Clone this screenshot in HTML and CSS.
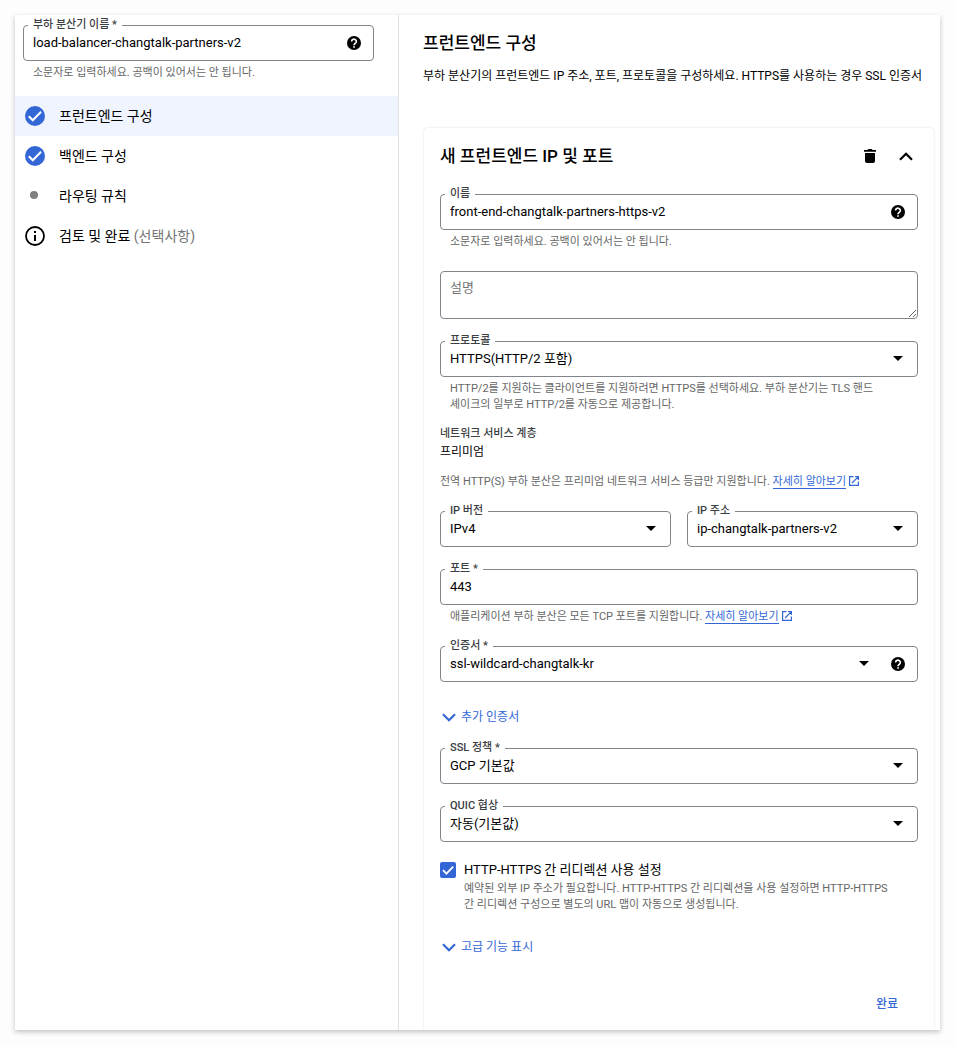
FILE: index.html
```html
<!DOCTYPE html>
<html lang="ko">

<head>
  <meta charset="UTF-8" />
  <meta name="viewport" content="width=device-width, initial-scale=1.0" />
  <title>부하 분산기</title>
  <link rel="stylesheet" href="styles.css">
</head>

<body>
  <!-- Shared icons -->
  <svg class="sprite" aria-hidden="true">
    <symbol id="icon-help" viewBox="0 0 14 14">
      <circle cx="7" cy="7" r="7" />
      <path d="M4.600 5.400a2.400 2.200 0 1 1 3.900 1.700C7.600 7.800 7 8.100 7 9.200" fill="none" stroke="#fff" stroke-width="1.600" />
      <path d="M6.200 10.200h1.700v1.600H6.200z" fill="#fff" />
    </symbol>
    <symbol id="icon-done" viewBox="0 0 20 20">
      <circle cx="10" cy="10" r="10" />
      <path d="M3.800 10.300l4 4 8.300-8.500" fill="none" stroke="#fff" stroke-width="2" />
    </symbol>
    <symbol id="icon-arrow" viewBox="0 0 10 5">
      <path d="M0 0h10L5 5z" />
    </symbol>
    <symbol id="icon-chevron" viewBox="0 0 14 9">
      <path d="M1 1.200l6 6 6-6" fill="none" stroke="currentColor" stroke-width="2.200" />
    </symbol>
    <symbol id="icon-external" viewBox="0 0 10 10">
      <path d="M4.500 .6H.6v8.800h8.800V5.500M6 .6h3.400V4M9.200 .8L3 7" fill="none" stroke="currentColor" stroke-width="1.200" />
    </symbol>
  </svg>

  <div class="window">
    <aside class="sidebar">
      <div class="sidebar-field">
        <div class="field-box">
          <label for="lbName">부하 분산기 이름 *</label>
          <input type="text" id="lbName" value="load-balancer-changtalk-partners-v2" />
          <button type="button" class="help" aria-label="도움말"><svg><use href="#icon-help" /></svg></button>
        </div>
        <p class="hint">소문자로 입력하세요. 공백이 있어서는 안 됩니다.</p>
      </div>

      <nav class="steps">
        <a href="#frontend" class="step active"><svg class="step-icon done"><use href="#icon-done" /></svg>프런트엔드 구성</a>
        <a href="#backend" class="step"><svg class="step-icon done"><use href="#icon-done" /></svg>백엔드 구성</a>
        <a href="#routing" class="step"><svg class="step-icon" viewBox="0 0 20 20"><circle cx="9" cy="9" r="4" fill="#808080" /></svg>라우팅 규칙</a>
        <a href="#review" class="step">
          <svg class="step-icon" viewBox="0 0 20 20">
            <circle cx="10" cy="10" r="9" fill="none" stroke="#000" stroke-width="1.800" />
            <path d="M9 5h2v2H9zM9 9h2v6H9z" />
          </svg>
          <span>검토 및 완료 <span class="optional">(선택사항)</span></span>
        </a>
      </nav>
    </aside>

    <main class="content" id="frontend">
      <h1>프런트엔드 구성</h1>
      <p class="intro">부하 분산기의 프런트엔드 IP 주소, 포트, 프로토콜을 구성하세요. HTTPS를 사용하는 경우 SSL 인증서</p>

      <form class="card">
        <div class="card-header">
          <h2>새 프런트엔드 IP 및 포트</h2>
          <button type="button" class="icon-button" aria-label="삭제">
            <svg width="12" height="14" viewBox="0 0 12 14"><path d="M0 1h3.500l.7-1h3.600l.7 1H12v1.800H0zM1 4h10v8a2 2 0 0 1-2 2H3a2 2 0 0 1-2-2z" /></svg>
          </button>
          <button type="button" class="icon-button" aria-label="접기">
            <svg class="chevron up"><use href="#icon-chevron" /></svg>
          </button>
        </div>

        <div class="field">
          <div class="field-box">
            <label for="feName">이름</label>
            <input type="text" id="feName" value="front-end-changtalk-partners-https-v2" />
            <button type="button" class="help" aria-label="도움말"><svg><use href="#icon-help" /></svg></button>
          </div>
          <p class="hint">소문자로 입력하세요. 공백이 있어서는 안 됩니다.</p>
        </div>

        <div class="field">
          <textarea id="description" placeholder="설명" aria-label="설명"></textarea>
        </div>

        <div class="field protocol">
          <div class="field-box">
            <label for="protocol">프로토콜</label>
            <select id="protocol"><option>HTTPS(HTTP/2 포함)</option></select>
            <svg class="arrow"><use href="#icon-arrow" /></svg>
          </div>
          <p class="hint">HTTP/2를 지원하는 클라이언트를 지원하려면 HTTPS를 선택하세요. 부하 분산기는 TLS 핸드<br />셰이크의 일부로 HTTP/2를 자동으로 제공합니다.</p>
        </div>

        <div class="tier">
          <h3>네트워크 서비스 계층</h3>
          <p class="tier-value">프리미엄</p>
          <p class="note">전역 HTTP(S) 부하 분산은 프리미엄 네트워크 서비스 등급만 지원합니다. <a href="#tiers" class="link">자세히 알아보기</a><svg class="external"><use href="#icon-external" /></svg></p>
        </div>

        <div class="row">
          <div class="field">
            <div class="field-box">
              <label for="ipVersion">IP 버전</label>
              <select id="ipVersion"><option>IPv4</option></select>
              <svg class="arrow"><use href="#icon-arrow" /></svg>
            </div>
          </div>
          <div class="field">
            <div class="field-box">
              <label for="ipAddress">IP 주소</label>
              <select id="ipAddress"><option>ip-changtalk-partners-v2</option></select>
              <svg class="arrow"><use href="#icon-arrow" /></svg>
            </div>
          </div>
        </div>

        <div class="field">
          <div class="field-box">
            <label for="port">포트 *</label>
            <input type="text" id="port" value="443" />
          </div>
          <p class="hint">애플리케이션 부하 분산은 모든 TCP 포트를 지원합니다. <a href="#ports" class="link">자세히 알아보기</a><svg class="external"><use href="#icon-external" /></svg></p>
        </div>

        <div class="field">
          <div class="field-box">
            <label for="certificate">인증서 *</label>
            <select id="certificate"><option>ssl-wildcard-changtalk-kr</option></select>
            <svg class="arrow beside-help"><use href="#icon-arrow" /></svg>
            <button type="button" class="help" aria-label="도움말"><svg><use href="#icon-help" /></svg></button>
          </div>
        </div>

        <button type="button" class="expander"><svg class="chevron"><use href="#icon-chevron" /></svg>추가 인증서</button>

        <div class="field">
          <div class="field-box">
            <label for="sslPolicy">SSL 정책 *</label>
            <select id="sslPolicy"><option>GCP 기본값</option></select>
            <svg class="arrow"><use href="#icon-arrow" /></svg>
          </div>
        </div>

        <div class="field quic">
          <div class="field-box">
            <label for="quic">QUIC 협상</label>
            <select id="quic"><option>자동(기본값)</option></select>
            <svg class="arrow"><use href="#icon-arrow" /></svg>
          </div>
        </div>

        <div class="check">
          <span class="check-box">
            <input type="checkbox" id="redirect" checked />
            <svg viewBox="0 0 16 16"><path d="M3 8.200l3.400 3.400L13.200 4.600" fill="none" stroke="#fff" stroke-width="1.800" /></svg>
          </span>
          <div>
            <label for="redirect">HTTP-HTTPS 간 리디렉션 사용 설정</label>
            <p class="note">예약된 외부 IP 주소가 필요합니다. HTTP-HTTPS 간 리디렉션을 사용 설정하면 HTTP-HTTPS<br />간 리디렉션 구성으로 별도의 URL 맵이 자동으로 생성됩니다.</p>
          </div>
        </div>

        <button type="button" class="expander"><svg class="chevron"><use href="#icon-chevron" /></svg>고급 기능 표시</button>

        <div class="actions">
          <button type="button" class="done-button">완료</button>
        </div>
      </form>
    </main>
  </div>
</body>

</html>
```

FILE: styles.css
```css
* {
  box-sizing: border-box;
}

body {
  margin: 0;
  padding: 15px;
  background-color: #fdfdfd;
  color: #000;
  font-family: Roboto, "Noto Sans CJK KR", sans-serif;
  font-size: 13px;
  line-height: 16px;
}

h1,
h2,
h3,
p {
  margin: 0;
}

button,
input,
select,
textarea {
  font: inherit;
  color: inherit;
}

button {
  border: 0;
  padding: 0;
  background: none;
  cursor: pointer;
}

svg {
  display: block;
  flex: none;
}

.sprite {
  display: none;
}

.window {
  display: flex;
  overflow: hidden;
  background-color: #fff;
  box-shadow: 0 2px 5px rgba(0, 0, 0, 0.24);
}

/* Left column */
.sidebar {
  flex: 0 0 384px;
  padding-top: 10px;
  border-right: 1px solid #e0e0e0;
}

.sidebar-field {
  margin: 0 24px 16px 8px;
}

.step {
  display: flex;
  align-items: center;
  gap: 14px;
  height: 40px;
  padding: 0 10px;
  color: #000;
  font-size: 14px;
  text-decoration: none;
}

.step.active {
  background-color: #f0f4ff;
}

.step-icon {
  width: 20px;
  height: 20px;
}

.step-icon.done {
  fill: #3367d6;
}

.optional {
  color: #757575;
}

/* Right column */
.content {
  flex: 1;
  min-width: 0;
  padding: 16px 6px 0 24px;
}

h1,
h2 {
  font-size: 17px;
  font-weight: 500;
  line-height: 24px;
}

.intro {
  margin: 13px -6px 44px 0;
  font-size: 12px;
}

.card {
  margin-left: 1px;
  padding: 16px 16px 8px;
  border-radius: 4px 4px 0 0;
  box-shadow: 0 0 2px rgba(0, 0, 0, 0.16);
}

.card-header {
  display: flex;
  align-items: center;
  margin-bottom: 26px;
}

.card-header h2 {
  flex: 1;
}

.icon-button {
  display: flex;
  align-items: center;
  justify-content: center;
  width: 24px;
  height: 24px;
  margin-left: 12px;
}

.chevron {
  width: 14px;
  height: 9px;
}

.chevron.up {
  transform: rotate(180deg);
}

/* Outlined fields */
.field {
  margin-bottom: 22px;
}

.field-box {
  position: relative;
}

.field-box label {
  position: absolute;
  top: -7px;
  left: 5px;
  padding: 0 5px;
  background-color: #fff;
  color: #3c4043;
  font-size: 11px;
  font-weight: 500;
  line-height: 14px;
}

.field-box input,
.field-box select,
textarea {
  display: block;
  width: 100%;
  height: 36px;
  margin: 0;
  padding: 0 9px 2px;
  border: 1px solid #80868b;
  border-radius: 4px;
  background-color: #fff;
  appearance: none;
}

.field-box select {
  padding-bottom: 0;
}

textarea {
  height: 48px;
  padding: 8px 9px;
  resize: vertical;
}

textarea::placeholder {
  color: #757575;
}

.help {
  position: absolute;
  top: 11px;
  right: 13px;
}

.help svg {
  width: 14px;
  height: 14px;
}

.arrow {
  position: absolute;
  top: 15px;
  right: 15px;
  width: 10px;
  height: 5px;
  pointer-events: none;
}

.arrow.beside-help {
  right: 49px;
}

.hint,
.note {
  color: #666;
  font-size: 11px;
}

.hint {
  margin: 4px 9px -1px 10px;
}

.protocol {
  margin-bottom: 14px;
}

.tier {
  margin-bottom: 21px;
}

.tier h3 {
  color: #3c4043;
  font-size: 11px;
  font-weight: 500;
  line-height: 16px;
}

.tier-value {
  margin: 2px 0 14px;
  font-size: 12px;
}

.link {
  border-bottom: 1px solid #3367d6;
  color: #3367d6;
  text-decoration: none;
}

.external {
  display: inline-block;
  width: 10px;
  height: 10px;
  margin-left: 3px;
  color: #3367d6;
  vertical-align: -1px;
}

.row {
  display: grid;
  grid-template-columns: 1fr 1fr;
  gap: 16px;
}

.expander {
  display: flex;
  align-items: center;
  gap: 5px;
  height: 26px;
  margin-bottom: 18px;
  padding: 0 2px;
  color: #3367d6;
  font-size: 12px;
}

.quic {
  margin-bottom: 20px;
}

.check {
  display: flex;
  gap: 8px;
  margin-bottom: 21px;
}

.check label {
  display: block;
  margin-bottom: 3px;
}

.check-box {
  position: relative;
  flex: none;
  width: 16px;
  height: 16px;
}

.check-box input {
  display: block;
  width: 16px;
  height: 16px;
  margin: 0;
  border: 2px solid #757575;
  border-radius: 2px;
  appearance: none;
}

.check-box input:checked {
  border-color: #3367d6;
  background-color: #3367d6;
}

.check-box svg {
  position: absolute;
  inset: 0;
  pointer-events: none;
}

.check-box input:not(:checked) + svg {
  display: none;
}

.actions {
  display: flex;
  justify-content: flex-end;
  margin-top: 26px;
}

.done-button {
  height: 36px;
  padding: 0 20px;
  color: #3367d6;
  font-size: 12px;
  font-weight: 500;
}
```
